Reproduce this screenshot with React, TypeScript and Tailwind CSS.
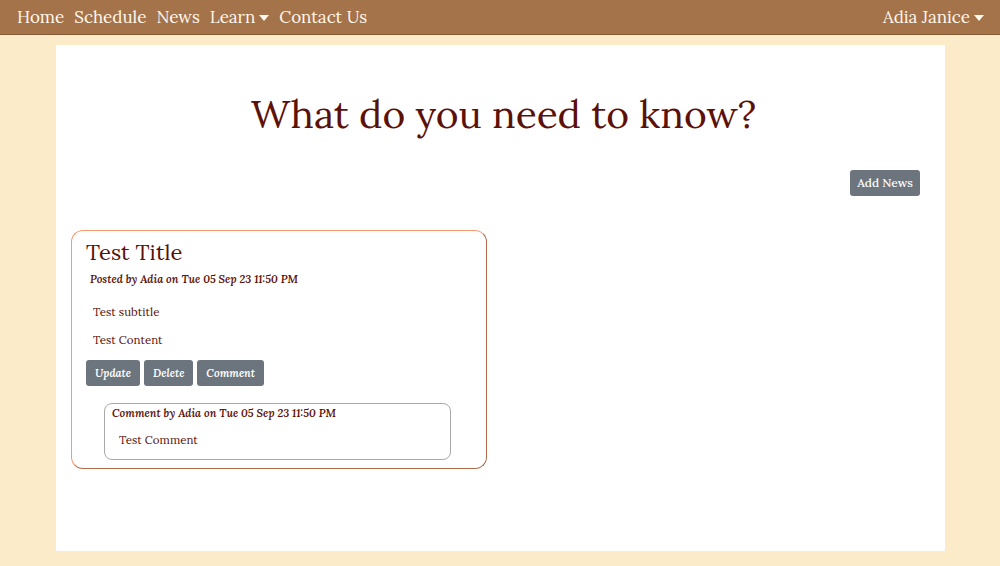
import { useState } from "react";

const FONT = "font-['Lora','DejaVu_Serif','Liberation_Serif',serif]";

function Caret() {
  return (
    <svg width="10" height="6" viewBox="0 0 10 6" className="ml-1 inline-block">
      <path d="M0 0 L10 0 L5 6 Z" fill="currentColor" />
    </svg>
  );
}

function NavBar() {
  return (
    <nav className="h-[35px] bg-[#a5734a] border-b border-[#8a5a35] flex items-center justify-between pl-[17px] pr-[16px] pt-[1px] text-[#fff8ec] text-[17px]">
      <div className="flex items-center gap-[10px]">
        <span>Home</span>
        <span>Schedule</span>
        <span>News</span>
        <span className="flex items-center">
          Learn
          <Caret />
        </span>
        <span>Contact Us</span>
      </div>
      <div className="flex items-center">
        Adia Janice
        <Caret />
      </div>
    </nav>
  );
}

function NewsCard() {
  const [comments] = useState([
    { author: "Adia", date: "Tue 05 Sep 23 11:50 PM", text: "Test Comment" },
  ]);

  return (
    <div className="w-[416px] rounded-[12px] border border-t-[#f79a6e] border-l-[#f79a6e] border-r-[#b06a4a] border-b-[#b06a4a] px-[14px] pt-[6px] pb-[8px]">
      <h3 className="text-[22px] leading-[30px]">Test Title</h3>
      <p className="text-[11px] italic font-semibold mt-[4px] ml-[4px]">
        Posted by Adia on Tue 05 Sep 23 11:50 PM
      </p>
      <p className="text-[11.5px] mt-[15px] ml-[7px]">Test subtitle</p>
      <p className="text-[11.5px] mt-[11px] ml-[7px]">Test Content</p>

      <div className="flex gap-[4px] mt-[12px]">
        {["Update", "Delete", "Comment"].map((b) => (
          <button
            key={b}
            className="h-[26px] px-[9px] rounded-[3px] bg-[#6c757d] text-white text-[11px] italic font-semibold"
          >
            {b}
          </button>
        ))}
      </div>

      {comments.map((c, i) => (
        <div
          key={i}
          className="ml-[18px] mt-[17px] w-[347px] h-[57px] rounded-[8px] border border-[#a9a9a9] px-[7px] pt-[1px]"
        >
          <p className="text-[11px] italic font-semibold">
            Comment by {c.author} on {c.date}
          </p>
          <p className="text-[11.5px] mt-[9px] ml-[7px]">{c.text}</p>
        </div>
      ))}
    </div>
  );
}

export default function App() {
  return (
    <div className={`${FONT} min-h-[566px] bg-[#fbebc9] text-[#5c1108]`}>
      <NavBar />
      <main className="ml-[56px] w-[889px] mt-[10px] h-[506px] bg-white px-[15px] pt-[45px]">
        <h1 className="text-[39px] text-center leading-[48px] pl-[6px]">What do you need to know?</h1>
        <div className="flex justify-end mt-[32px] pr-[10px]">
          <button className="h-[26px] px-[7px] rounded-[3px] bg-[#6c757d] text-white text-[12px] font-medium">
            Add News
          </button>
        </div>
        <div className="mt-[34px]">
          <NewsCard />
        </div>
      </main>
    </div>
  );
}
